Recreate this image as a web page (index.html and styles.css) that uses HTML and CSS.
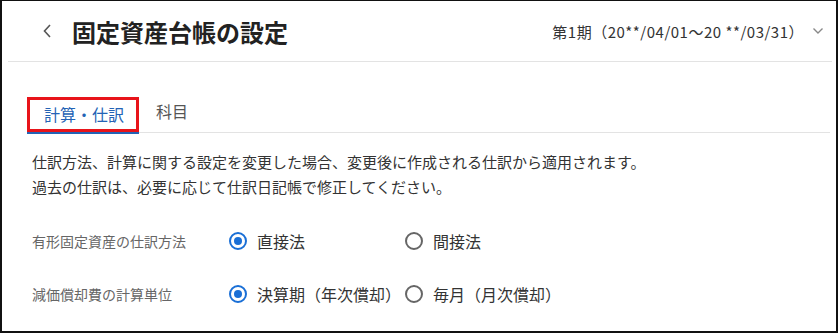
FILE: index.html
```html
<!DOCTYPE html>
<html lang="ja">
<head>
<meta charset="utf-8">
<link rel="stylesheet" href="styles.css">
</head>
<body>
<div class="frame">
  <header class="header">
    <button class="back" aria-label="戻る">
      <svg width="10" height="16" viewBox="0 0 10 16"><path d="M8 2 L2.5 8 L8 14" fill="none" stroke="#555" stroke-width="1.6"/></svg>
    </button>
    <h1 class="title">固定資産台帳の設定</h1>
    <div class="period">
      <span>第1期（20**/04/01〜20 **/03/31）</span>
      <svg class="caret" width="12" height="8" viewBox="0 0 12 8"><path d="M1.5 1.5 L6 6 L10.5 1.5" fill="none" stroke="#888" stroke-width="1.4"/></svg>
    </div>
  </header>
  <nav class="tabs">
    <div class="tab active">計算・仕訳</div>
    <div class="tab">科目</div>
  </nav>
  <p class="desc">仕訳方法、計算に関する設定を変更した場合、変更後に作成される仕訳から適用されます。<br>過去の仕訳は、必要に応じて仕訳日記帳で修正してください。</p>
  <div class="form">
    <div class="row">
      <div class="label">有形固定資産の仕訳方法</div>
      <label class="opt"><span class="radio on"></span>直接法</label>
      <label class="opt"><span class="radio"></span>間接法</label>
    </div>
    <div class="row">
      <div class="label">減価償却費の計算単位</div>
      <label class="opt"><span class="radio on"></span>決算期（年次償却）</label>
      <label class="opt"><span class="radio"></span>毎月（月次償却）</label>
    </div>
  </div>
</div>
</body>
</html>
```
FILE: styles.css
```css
* { box-sizing: border-box; }
html, body { margin: 0; padding: 0; background: #fff; }
body {
  font-family: "Noto Sans CJK JP", "Noto Sans", sans-serif;
  color: #333;
}
.frame {
  width: 838px;
  height: 333px;
  border-top: 1px solid #111;
  border-left: 2px solid #111;
  border-right: 2px solid #111;
  border-bottom: 2px solid #111;
  overflow: hidden;
}
.header {
  height: 61px;
  margin: 0 4px 0 6px;
  border-bottom: 1px solid #e3e3e3;
  display: flex;
  align-items: center;
}
.back {
  border: 0;
  background: none;
  padding: 0;
  margin-left: 34px;
  width: 10px;
  height: 16px;
  display: flex;
}
.title {
  margin: 0 0 0 20px;
  font-size: 24px;
  font-weight: 700;
  color: #222;
}
.period {
  margin-left: auto;
  display: flex;
  align-items: center;
  font-size: 15px;
  letter-spacing: 0.5px;
  color: #333;
}
.caret { margin-left: 8px; margin-right: 8px; }
.tabs {
  display: flex;
  margin: 35px 6px 0 25px;
  border-bottom: 1px solid #e3e3e3;
  height: 36px;
}
.tab {
  font-size: 16px;
  height: 35px;
  line-height: 29px;
  padding: 0 15px;
  color: #555;
}
.tab.active {
  color: #2463b5;
  border: 3px solid #e8141a;
  box-shadow: 0 2px 0 #2463b5;
  padding: 0 12px 0 14px;
}
.tab + .tab { padding-left: 17px; }
.desc {
  margin: 16px 0 0 30px;
  font-size: 15px;
  line-height: 25px;
  color: #333;
}
.form {
  margin: 22px 0 0 30px;
  display: flex;
  flex-direction: column;
  gap: 13px;
}
.row {
  display: grid;
  grid-template-columns: 197px 176px auto;
  align-items: center;
  height: 40px;
}
.label {
  font-size: 14px;
  color: #666;
}
.opt {
  display: flex;
  align-items: center;
  font-size: 16px;
  color: #333;
}
.radio {
  width: 18px;
  height: 18px;
  border: 2px solid #666;
  border-radius: 50%;
  margin-right: 10px;
  display: flex;
  align-items: center;
  justify-content: center;
}
.radio.on { border-color: #1a6fd6; }
.radio.on::after {
  content: "";
  width: 8px;
  height: 8px;
  border-radius: 50%;
  background: #1a6fd6;
}
```
